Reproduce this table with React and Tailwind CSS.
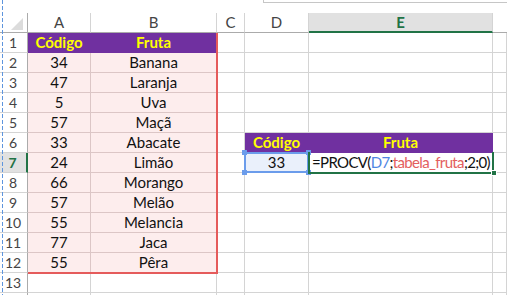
import React from "react";

const W = ["w-[28px]", "w-[63px]", "w-[126px]", "w-[28px]", "w-[64px]", "w-[184px]", "flex-1"];

const data = [
  ["34", "Banana"],
  ["47", "Laranja"],
  ["5", "Uva"],
  ["57", "Maçã"],
  ["33", "Abacate"],
  ["24", "Limão"],
  ["66", "Morango"],
  ["57", "Melão"],
  ["55", "Melancia"],
  ["77", "Jaca"],
  ["55", "Pêra"],
];

function Purple({ w, children }) {
  return (
    <div className={`${w} h-full shrink-0 bg-[#7030a0] border-r border-b border-[#7030a0] flex items-center justify-center text-[#ffff00] font-bold text-[15px]`}>
      {children}
    </div>
  );
}

function Pink({ w, children }) {
  return (
    <div className={`${w} h-full shrink-0 bg-[#fdeded] border-r border-b border-[#dcc6c6] flex items-center justify-center text-[#111] text-[15px]`}>
      {children}
    </div>
  );
}

function Blank({ w, children, className = "" }) {
  return (
    <div className={`${w} h-full shrink-0 border-r border-b border-[#d4d4d4] flex items-center justify-center text-[15px] ${className}`}>
      {children}
    </div>
  );
}

function RowHead({ n, label }) {
  const active = n === 7;
  return (
    <div
      className={`w-[28px] h-full shrink-0 border-b flex items-center justify-center text-[14px] pr-[1px] ${
        active
          ? "bg-[#e1e1e1] border-r-2 border-r-[#217346] border-b-[#d4d4d4] text-[#217346] font-bold"
          : "border-r border-r-[#ababab] border-b-[#d4d4d4] text-[#444]"
      }`}
    >
      {label}
    </div>
  );
}

export default function App() {
  const rows = [];
  for (let r = 1; r <= 14; r++) {
    let a = null, b = null, d = null, e = null;
    if (r === 1) {
      a = <Purple w={W[1]}>Código</Purple>;
      b = <Purple w={W[2]}>Fruta</Purple>;
    } else if (r >= 2 && r <= 12) {
      a = <Pink w={W[1]}>{data[r - 2][0]}</Pink>;
      b = <Pink w={W[2]}>{data[r - 2][1]}</Pink>;
    } else {
      a = <Blank w={W[1]} />;
      b = <Blank w={W[2]} />;
    }
    if (r === 6) {
      d = <Purple w={W[4]}>Código</Purple>;
      e = <Purple w={W[5]}>Fruta</Purple>;
    } else if (r === 7) {
      d = <Blank w={W[4]} className="bg-[#eaf0fb] text-[#111]">33</Blank>;
      e = (
        <div className={`${W[5]} h-full shrink-0 border-b border-r border-[#d4d4d4] flex items-center pl-[3px] text-[15px] tracking-[-0.65px] whitespace-nowrap bg-white text-[#111]`}>
          <span>=PROCV(</span>
          <span className="text-[#4f86e3]">D7</span>
          <span>;</span>
          <span className="text-[#e3605e]">tabela_fruta</span>
          <span>;2;0)</span>
        </div>
      );
    } else {
      d = <Blank w={W[4]} />;
      e = <Blank w={W[5]} />;
    }
    rows.push(
      <div key={r} className="flex h-[20px]">
        <RowHead n={r} label={r <= 13 ? r : ""} />
        {a}
        {b}
        <Blank w={W[3]} />
        {d}
        {e}
        <Blank w={W[6]} />
      </div>
    );
  }

  return (
    <div className="relative w-[507px] h-[295px] overflow-hidden bg-white" style={{ fontFamily: "Lato, 'Liberation Sans', sans-serif" }}>
      {/* top strip */}
      <div className="h-[13px] flex">
        <div className="ml-[263px] flex-1 h-[3px] border-l border-b border-[#c6c6c6]" />
      </div>
      {/* column headers */}
      <div className="flex h-[20px] text-[15px] text-[#444]">
        <div className="w-[28px] h-full shrink-0 border-r border-b border-[#ababab] relative">
          <svg className="absolute left-0 top-0" width="28" height="20" viewBox="0 0 28 20">
            <polygon points="23,5 23,17 11,17" fill="#dcdcdc" />
          </svg>
        </div>
        <div className={`${W[1]} h-full shrink-0 border-r border-r-[#d4d4d4] border-b border-b-[#ababab] flex items-center justify-center`}>A</div>
        <div className={`${W[2]} h-full shrink-0 border-r border-r-[#d4d4d4] border-b border-b-[#ababab] flex items-center justify-center`}>B</div>
        <div className={`${W[3]} h-full shrink-0 border-r border-r-[#d4d4d4] border-b border-b-[#ababab] flex items-center justify-center`}>C</div>
        <div className={`${W[4]} h-full shrink-0 border-r border-r-[#d4d4d4] border-b border-b-[#ababab] flex items-center justify-center`}>D</div>
        <div className={`${W[5]} h-full shrink-0 bg-[#e1e1e1] border-r border-r-[#d4d4d4] border-b-2 border-b-[#217346] flex items-center justify-center text-[#217346] font-bold`}>E</div>
        <div className={`${W[6]} h-full shrink-0 border-b border-b-[#ababab]`} />
      </div>
      {rows}

      {/* dashed left line */}
      <svg className="absolute left-[1px] top-0" width="3" height="295">
        <line x1="1.5" y1="0" x2="1.5" y2="295" stroke="#5e95dd" strokeWidth="1" strokeDasharray="4 2" />
      </svg>

      {/* tabela_fruta reference highlight */}
      <div className="absolute left-[28px] top-[33px] w-[190px] h-[241px] border-r-2 border-b-2 border-[#e55b5b] pointer-events-none" />

      {/* D7 reference highlight */}
      <div className="absolute left-[244px] top-[152px] w-[65px] h-[21px] border-2 border-[#6b9ceb] pointer-events-none" />
      <div className="absolute left-[242px] top-[150px] w-[5px] h-[5px] bg-[#6b9ceb]" />
      <div className="absolute left-[306px] top-[150px] w-[5px] h-[5px] bg-[#6b9ceb]" />
      <div className="absolute left-[242px] top-[170px] w-[5px] h-[5px] bg-[#6b9ceb]" />
      <div className="absolute left-[306px] top-[170px] w-[5px] h-[5px] bg-[#6b9ceb]" />

      {/* active cell E7 */}
      <div className="absolute left-[308px] top-[152px] w-[186px] h-[22px] border-l-2 border-r-2 border-b-2 border-[#217346] pointer-events-none" />
      <div className="absolute left-[491px] top-[170px] w-[4px] h-[4px] bg-[#217346] border border-white box-content" />
    </div>
  );
}
